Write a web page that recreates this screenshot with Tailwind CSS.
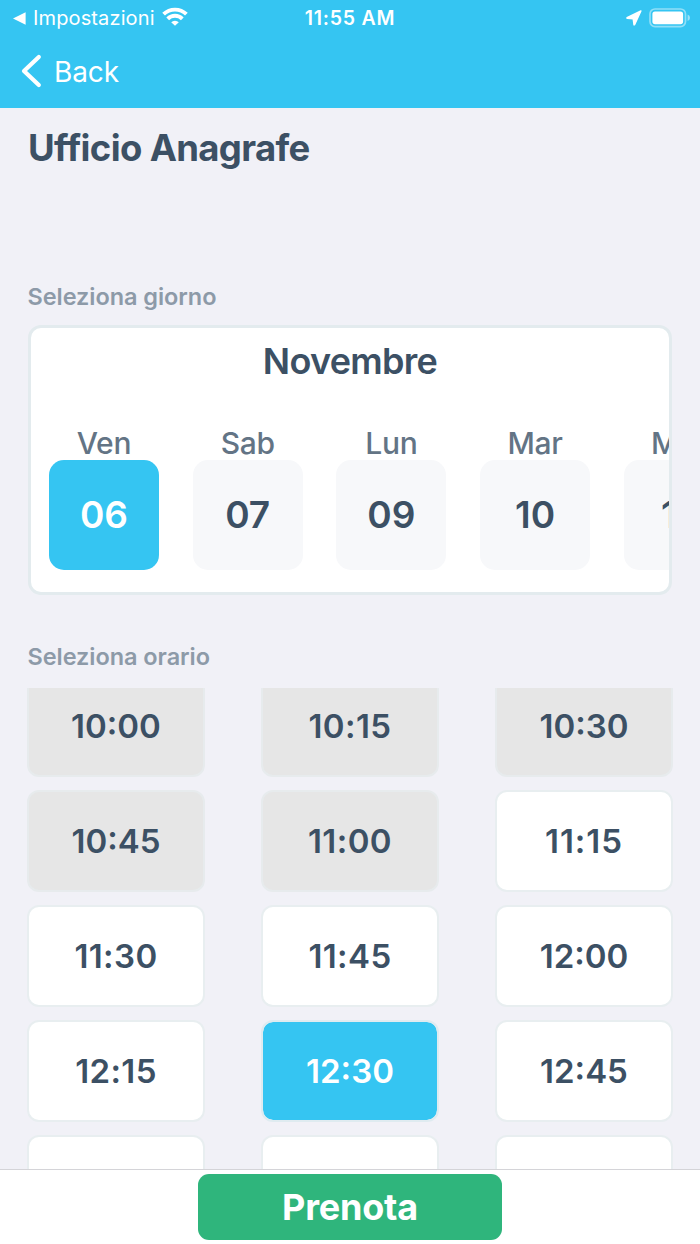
<!DOCTYPE html>
<html lang="it">
<head>
  <meta charset="UTF-8" />
  <meta name="viewport" content="width=device-width, initial-scale=1.0" />
  <title>Ufficio Anagrafe</title>
  <script src="https://cdn.jsdelivr.net/npm/@tailwindcss/browser@4"></script>
  <style>
    body { font-family: 'Inter', 'Liberation Sans', sans-serif; }
  </style>
</head>
<body class="w-[700px] h-[1244px] overflow-hidden flex flex-col bg-[#f1f1f7] text-[#3c5064]">
  <!-- Status bar + navigation -->
  <header class="h-[108px] shrink-0 bg-[#35c5f2] text-white">
    <div class="h-9 grid grid-cols-3 items-center pl-[13px] pr-[9px]">
      <div class="flex items-center">
        <svg class="w-[13px] h-[13px]" viewBox="0 0 13 13" fill="currentColor"><path d="M0 6.5 L12.6 0.2 V12.8 Z" /></svg>
        <span class="ml-[7px] text-[20px] leading-9 tracking-[0.13px]">Impostazioni</span>
        <svg class="ml-[7px] -mt-[3px] w-[26px] h-[19px]" viewBox="0 0 26 19" fill="none" stroke="currentColor" stroke-width="3.9">
          <path d="M1.6 7.2 A16.4 16.4 0 0 1 24.4 7.2" />
          <path d="M5.7 11.8 A10.4 10.4 0 0 1 20.3 11.8" />
          <path d="M13 18.8 L9.2 15.2 A5.4 5.4 0 0 1 16.8 15.2 Z" fill="currentColor" stroke="none" />
        </svg>
      </div>
      <div class="-ml-[4px] text-center text-[19.5px] leading-9 font-semibold tracking-[0.8px]">11:55 AM</div>
      <div class="flex items-center justify-end">
        <svg class="w-4 h-4 mr-[7px]" viewBox="0 0 16 16" fill="currentColor" stroke="currentColor" stroke-width="1.4" stroke-linejoin="round"><path d="M14.9 1 L1 7.7 L1.1 8.3 L7.2 8.8 L8 14.9 L8.6 14.8 Z" /></svg>
        <svg class="w-[42px] h-5" viewBox="0 0 42 20" fill="none">
          <rect x="1" y="1" width="35.5" height="17.6" rx="5" stroke="#fff" stroke-opacity=".45" stroke-width="1.7" />
          <rect x="3.4" y="3.4" width="30.7" height="12.8" rx="2.6" fill="#fff" />
          <path d="M38.6 6.6 Q41 7.6 41 9.8 Q41 12 38.6 13 Z" fill="#fff" fill-opacity=".5" />
        </svg>
      </div>
    </div>
    <a class="flex items-center h-[70px] pl-[21px]">
      <svg class="w-[21px] h-[34px]" viewBox="0 0 21 34" fill="none" stroke="currentColor" stroke-width="4.2" stroke-linecap="round" stroke-linejoin="round"><path d="M17.8 3 L3 17 L17.8 31" /></svg>
      <span class="ml-[12px] mt-px text-[28px] font-[370] tracking-[-0.1px]">Back</span>
    </a>
  </header>

  <main class="flex-1 min-h-0 flex flex-col px-[27px]">
    <h1 class="mt-[18px] h-11 pl-px text-[36.5px] leading-[44px] font-bold tracking-[-0.65px] whitespace-nowrap">Ufficio Anagrafe</h1>

    <h2 class="mt-[112px] h-[30px] pl-[0.5px] text-[23.5px] leading-[30px] font-semibold tracking-[-0.05px] text-[#8d9aa8]">Seleziona giorno</h2>
    <section class="mt-[13px] mx-px h-[270px] shrink-0 rounded-[13px] border-3 border-[#e3ebee] bg-white overflow-hidden">
      <div class="mt-[11px] h-11 text-center text-[36px] leading-[44px] font-semibold tracking-[-0.7px]">Novembre</div>
      <div id="days" class="mt-[42px] ml-[18px] flex gap-[33.7px]"></div>
    </section>

    <h2 class="mt-[47px] h-[30px] pl-[0.5px] text-[23.5px] leading-[30px] font-semibold tracking-[-0.05px] text-[#8d9aa8]">Seleziona orario</h2>
    <!-- Scrolled list, first and last rows are cut -->
    <div class="mt-[16px] flex-1 min-h-0 overflow-hidden">
      <div id="slots" class="-mt-[13px] grid grid-cols-[repeat(3,178px)] justify-between gap-y-[13px]"></div>
    </div>
  </main>

  <footer class="h-[75.5px] shrink-0 border-t border-[#d4d4d8] bg-white flex justify-center pt-[4.5px]">
    <button class="w-[304px] h-[66px] rounded-[11px] bg-[#2fb57c] text-white text-[36px] font-bold tracking-[-0.2px]">Prenota</button>
  </footer>

  <script>
    const days = [["Ven", "06"], ["Sab", "07"], ["Lun", "09"], ["Mar", "10"], ["Mer", "11"]];
    const selectedDay = "06";
    document.getElementById("days").innerHTML = days.map(([name, num]) => `
      <div class="w-[110px] shrink-0 text-center">
        <div class="h-[35px] text-[30px] leading-[36px] font-medium tracking-[-0.3px] text-[#637485]">${name}</div>
        <div class="h-[110px] rounded-[15px] text-[37px] leading-[110px] font-[580] ${num === "11" ? "tracking-[2px]" : ""} ${num === selectedDay ? "bg-[#35c5f2] text-white" : "bg-[#f7f8fa]"}">${num}</div>
      </div>`).join("");

    const times = ["10:00", "10:15", "10:30", "10:45", "11:00", "11:15", "11:30", "11:45", "12:00", "12:15", "12:30", "12:45", "", "", ""];
    const disabled = ["10:00", "10:15", "10:30", "10:45", "11:00"];
    const selectedTime = "12:30";
    document.getElementById("slots").innerHTML = times.map((t) => {
      let color = "border-[#e8eef0] bg-white";
      if (disabled.includes(t)) color = "border-[#e7ebed] bg-[#e6e6e6]";
      if (t === selectedTime) color = "border-[#dfebf0] bg-[#35c5f2] bg-clip-padding text-white";
      // "1" is a narrow digit, open the pairs up a little
      let spacing = "";
      if (t.startsWith("11") || t.endsWith("15")) spacing = "tracking-[0.4px]";
      if (t === "11:15") spacing = "tracking-[1px]";
      return `<div class="h-[102px] rounded-[12px] border-2 text-center text-[33px] leading-[98px] font-[580] ${spacing} ${color}">${t}</div>`;
    }).join("");
  </script>
</body>
</html>
